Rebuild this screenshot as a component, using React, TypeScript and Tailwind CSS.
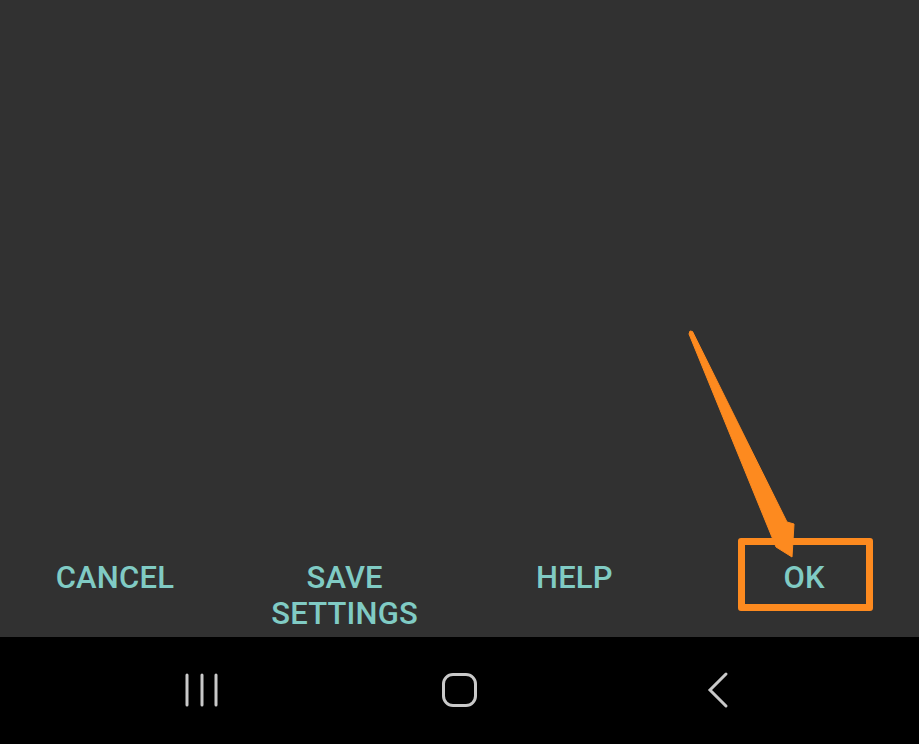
import { useState } from "react";

const ACTIONS = ["CANCEL", "SAVE SETTINGS", "HELP", "OK"];

// ─── 하단 버튼 줄 ───
function ActionRow() {
  const [pressed, setPressed] = useState<string | null>(null);
  return (
    <div className="grid grid-cols-4 items-start mb-[5px]">
      {ACTIONS.map((a) => (
        <button
          key={a}
          onClick={() => setPressed(a)}
          className={
            "flex flex-col items-center text-[31px] leading-[36px] font-medium text-[#80cbc4] tracking-[0.2px] " +
            (pressed === a ? "opacity-80" : "")
          }
        >
          {a === "SAVE SETTINGS" ? (
            <>
              <span>SAVE</span>
              <span>SETTINGS</span>
            </>
          ) : (
            <span>{a}</span>
          )}
        </button>
      ))}
    </div>
  );
}

// ─── 안드로이드 내비게이션 바 ───
function NavBar() {
  return (
    <div className="h-[107px] bg-black flex items-center justify-center gap-[218px] pb-[2px]">
      <div className="w-[40px] flex justify-center">
        <svg width="34" height="36" viewBox="0 0 34 36">
          <g stroke="#c9c9c9" strokeWidth="3" strokeLinecap="round">
            <line x1="2" y1="3" x2="2" y2="33" />
            <line x1="17" y1="3" x2="17" y2="33" />
            <line x1="31" y1="3" x2="31" y2="33" />
          </g>
        </svg>
      </div>
      <div className="w-[40px] flex justify-center">
        <div className="w-[35px] h-[34px] rounded-[11px] border-[3px] border-[#c9c9c9]" />
      </div>
      <div className="w-[40px] flex justify-center">
        <svg width="22" height="38" viewBox="0 0 22 38">
          <polyline
            points="19,3 3,19 19,35"
            fill="none"
            stroke="#c9c9c9"
            strokeWidth="3"
            strokeLinecap="round"
            strokeLinejoin="miter"
          />
        </svg>
      </div>
    </div>
  );
}

export default function App() {
  return (
    <div className="relative w-[919px] h-[744px] overflow-hidden font-['Roboto','Liberation_Sans',sans-serif]">
      <div className="h-[637px] bg-[#313131] flex flex-col justify-end">
        <ActionRow />
      </div>
      <NavBar />

      {/* 주석: OK 강조 상자와 화살표 */}
      <div className="absolute left-[738px] top-[538px] w-[135px] h-[73px] border-[7px] border-[#fd8a1f] rounded-[3px] pointer-events-none" />
      <svg
        className="absolute left-0 top-0 pointer-events-none"
        width="919"
        height="744"
        viewBox="0 0 919 744"
      >
        <polygon
          points="690,331 692.5,331.5 787,522 794,524 792,557 776,547 689,334"
          fill="#fd8a1f"
          strokeLinejoin="round"
          stroke="#fd8a1f"
          strokeWidth="1"
        />
      </svg>
    </div>
  );
}
